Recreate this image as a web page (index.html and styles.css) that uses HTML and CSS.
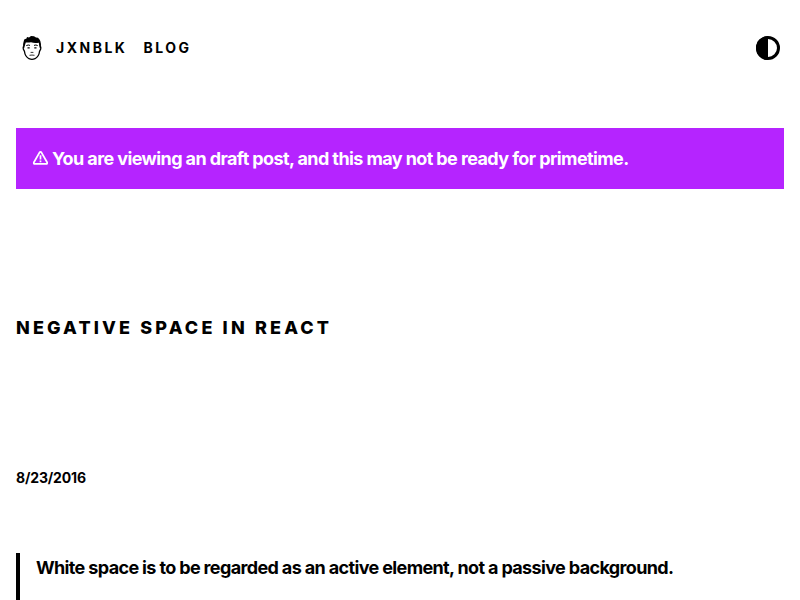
FILE: index.html
```
<!DOCTYPE html>
<html lang="en">
<head>
<meta charset="utf-8">
<title>Negative Space in React</title>
<link rel="stylesheet" href="styles.css">
</head>
<body>
<header class="nav">
  <a class="logo"><svg width="32" height="32" viewBox="0 0 32 32"><path d="M8 11.500L7.700 15Q7 14.500 7.300 17L8.500 19.500Q9 24.500 13 26.700Q16 28 19 26.700Q23 24.500 23.500 19.500L24.700 17Q25 14.500 24.300 15L24 11.500" fill="none" stroke="#000" stroke-width="1.300"/><path d="M7.500 15Q6.700 11 8.200 7.500L10.500 6.500L11 5L13 5.500L15 4L18 4.300L20 5.500L22 5.800L23.500 7.500Q25.500 10.500 24.500 15L23.500 14.500L22.800 10.800Q18 11.500 15 10.300Q12 10.800 9.800 10.500L8.500 14.500Z"/><path d="M10.300 13.600Q12.300 12.500 14 13.400M18 13.400Q20 12.500 21.700 13.600" fill="none" stroke="#000" stroke-width="1"/><path d="M11.500 15.900H13.700M18.300 15.900H20.500" stroke="#000" stroke-width="1.200"/><path d="M14.600 20.400H17.400M13.500 23.300Q16 22.800 18.500 23.300" fill="none" stroke="#000" stroke-width=".8"/></svg></a>
  <a class="link">Jxnblk</a>
  <a class="link">Blog</a>
  <button class="toggle" aria-label="Toggle color mode"><svg width="24" height="24" viewBox="0 0 24 24"><circle cx="12" cy="12" r="10.500" fill="none" stroke="#000" stroke-width="3"/><path d="M12 0A12 12 0 0 0 12 24Z"/></svg></button>
</header>
<main>
  <div class="banner"><svg class="warn" width="16" height="16" viewBox="0 0 16 16" role="img" aria-label="Warning"><path d="M7.600 2.400L1.900 12.300Q1.500 13.800 2.800 13.900H14.200Q15.500 13.800 15.100 12.300L9.400 2.400Q8.500 1.300 7.600 2.400Z" fill="none" stroke="#fff" stroke-width="1.800"/><path d="M8.500 5.300V9.500M8.500 10.600V12.300" stroke="#fff" stroke-width="1.700"/></svg><span>You are viewing an draft post, and this may not be ready for primetime.</span></div>
  <h1>Negative Space in React</h1>
  <p class="date">8/23/2016</p>
  <blockquote>White space is to be regarded as an active element, not a passive background.</blockquote>
</main>
</body>
</html>
```
FILE: styles.css
```
* { box-sizing: border-box; }
body { margin: 0; height: 600px; overflow: hidden; background: #fff; color: #000; font: 700 18px/1.625 Inter, sans-serif; letter-spacing: -.64px; }
.nav { display: flex; align-items: center; padding: 32px 16px; height: 96px; }
.logo, .logo svg, .toggle svg { display: block; }
.link { font-size: 14px; font-weight: 700; letter-spacing: 2.5px; text-transform: uppercase; margin-left: 8px; }
.link + .link { margin-left: 16px; }
.toggle { margin-left: auto; margin-right: 4px; padding: 0; border: 0; background: none; }
main { height: 504px; overflow: hidden; padding: 32px 16px 0; }
.banner { display: flex; height: 61px; padding: 16px; background: #b524ff; color: #fff; letter-spacing: -.6px; }
.warn { margin: 6px 4px 0 0; }
h1 { margin: 128px 0; font-size: 18px; line-height: 22px; font-weight: 800; letter-spacing: 3.15px; text-transform: uppercase; }
.date { margin: 0 0 64px; font-size: 14px; line-height: 22px; letter-spacing: -.15px; }
blockquote { margin: 0; padding-left: 16px; border-left: 4px solid #000; height: 100px; }
```
